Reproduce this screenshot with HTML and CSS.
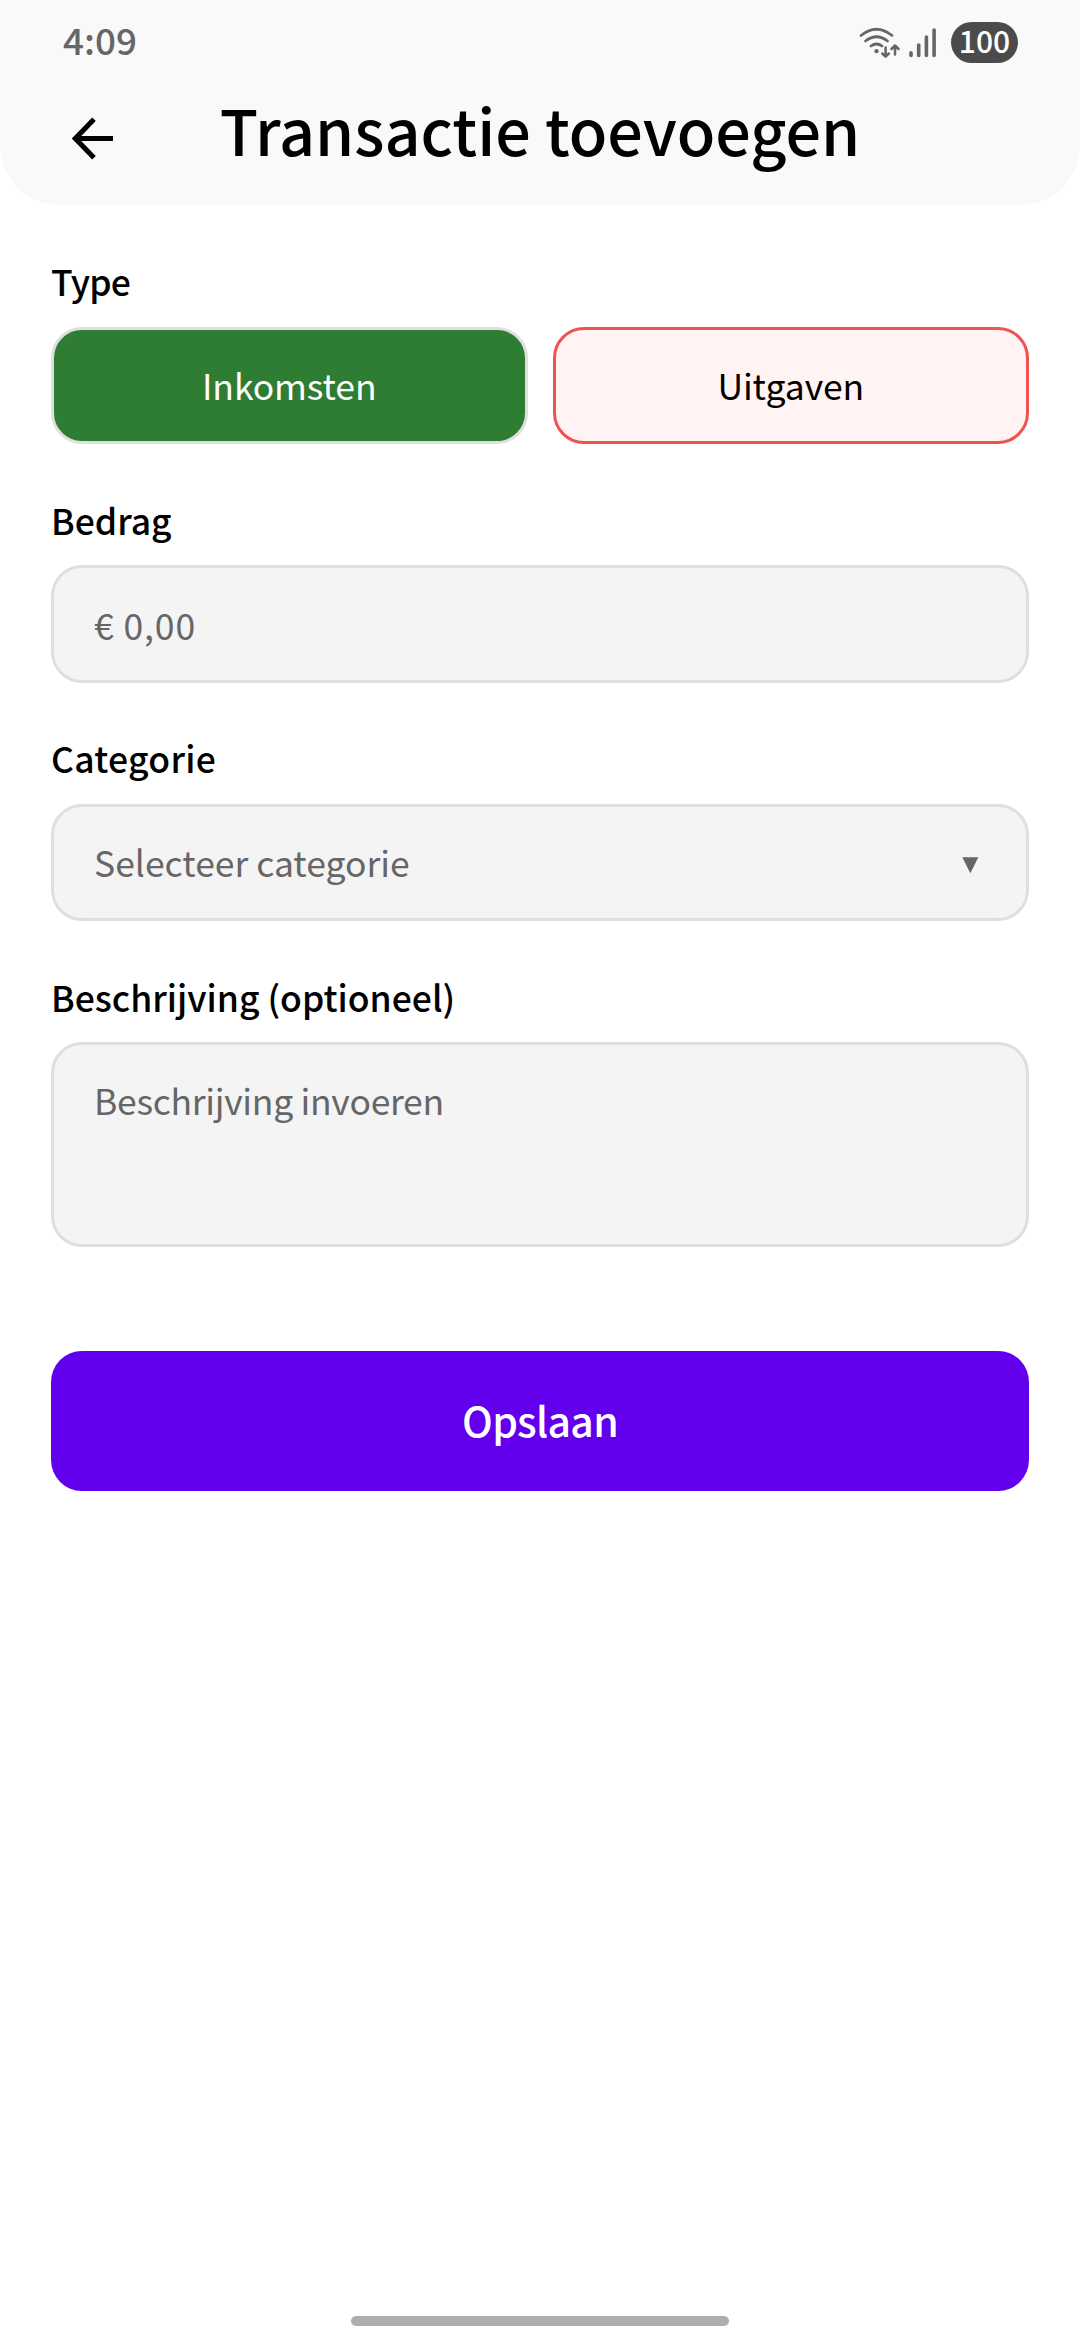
FILE: index.html
```html
<!DOCTYPE html>
<html lang="nl">
<head>
<meta charset="utf-8">
<title>Transactie toevoegen</title>
<link rel="stylesheet" href="styles.css">
</head>
<body>
<header class="header">
  <div class="status">
    <span class="time">4:09</span>
    <div class="status-icons">
      <svg class="wifi" width="42" height="34" viewBox="0 0 42 34" fill="none" stroke="#666" stroke-width="2.7" stroke-linecap="round" stroke-linejoin="round">
        <path d="M2 9.500Q17.500-3 33 9.500M6.500 15Q17.500 6.500 28.500 15M12 20Q17.500 16 23 20"/>
        <circle cx="17.500" cy="25.200" r="2.100" fill="#666" stroke="none"/>
        <path d="M26.600 21.500V30M23.300 27.500L26.600 30.700L29.900 27.500M36 28.500V20M32.500 23L36 19.500L39.500 23" stroke-width="2.500"/>
      </svg>
      <svg class="signal" width="28" height="34" viewBox="0 0 28 34" fill="none" stroke="#666" stroke-width="3.600" stroke-linecap="round">
        <path d="M2 26.700V29.500M9.700 19V29.500M17.400 11V29.500M25.100 4V29.500"/>
      </svg>
      <span class="battery">100</span>
    </div>
  </div>
  <div class="titlebar">
    <svg class="back" width="43" height="43" viewBox="0 0 43 43" fill="none" stroke="#000" stroke-width="5">
      <path d="M41 21.500H4.500M22 2.300L3.300 21.500L22 40.700"/>
    </svg>
    <h1 class="title">Transactie toevoegen</h1>
  </div>
</header>
<main class="form">
  <section class="field">
    <div class="label label-type">Type</div>
    <div class="toggle">
      <div class="option income">Inkomsten</div>
      <div class="option expense">Uitgaven</div>
    </div>
  </section>
  <section class="field">
    <div class="label label-low">Bedrag</div>
    <div class="input amount">€ 0,00</div>
  </section>
  <section class="field">
    <div class="label label-category">Categorie</div>
    <div class="input select">
      <span>Selecteer categorie</span>
      <svg class="caret" width="17" height="17" viewBox="0 0 17 17"><path d="M0.300 0.300H16.300L8.300 16.300Z" fill="#666"/></svg>
    </div>
  </section>
  <section class="field">
    <div class="label label-low">Beschrijving (optioneel)</div>
    <div class="input description">Beschrijving invoeren</div>
  </section>
  <div class="save">Opslaan</div>
</main>
<footer class="nav"><div class="handle"></div></footer>
</body>
</html>
```

FILE: styles.css
```css
* { box-sizing: border-box; }

body {
  margin: 0;
  width: 1080px;
  height: 2340px;
  display: flex;
  flex-direction: column;
  overflow: hidden;
  background: #fff;
  color: #000;
  font-family: "Noto Sans CJK SC", "Noto Sans", sans-serif;
  font-size: 35.5px;
}

.header {
  height: 205px;
  background: #f9f9f9;
  border-radius: 0 0 60px 60px;
}

.status {
  height: 84px;
  padding: 0 62px 0 63px;
  display: flex;
  justify-content: space-between;
}

.time {
  font-size: 36.8px;
  font-weight: 500;
  line-height: 78px;
  color: #666;
}

.status-icons {
  display: flex;
  align-items: center;
  height: 85px;
}

.signal { margin-left: 8px; }

.battery {
  width: 67px;
  height: 41px;
  margin-left: 14px;
  border-radius: 21px;
  background: #4b4b4b;
  color: #fff;
  font-size: 30px;
  font-weight: 500;
  line-height: 37px;
  text-align: center;
}

.titlebar {
  display: grid;
  grid-template-columns: 72px 1fr 72px;
  align-items: start;
}

.back {
  justify-self: end;
  margin-top: 33px;
  margin-right: -43px;
}

.title {
  margin: 0;
  font-size: 62.8px;
  font-weight: 500;
  line-height: 89px;
  text-align: center;
  white-space: nowrap;
}

.form {
  flex: 1;
  padding: 50px 51px 0;
  display: flex;
  flex-direction: column;
  gap: 49px;
}

.field {
  display: flex;
  flex-direction: column;
  gap: 20px;
}

.label {
  height: 52px;
  font-weight: 500;
  line-height: 52px;
}

.label-low { line-height: 54px; }
.label-type { letter-spacing: -0.8px; }
.label-category { letter-spacing: 0.3px; }

.toggle {
  display: grid;
  grid-template-columns: 1fr 1fr;
  gap: 25px;
}

.option {
  height: 117px;
  border: 3px solid #dfdfdf;
  border-radius: 31px;
  padding-bottom: 2px;
  display: flex;
  align-items: center;
  justify-content: center;
  letter-spacing: -0.1px;
}

.income {
  background: #2e7d32;
  color: #fff;
}

.expense {
  background: #fff3f3;
  border-color: #ef5350;
}

.input {
  height: 117px;
  padding: 0 40px;
  border: 3px solid #dfdfdf;
  border-radius: 31px;
  background: #f4f4f4;
  color: #666;
  display: flex;
  align-items: center;
}

.amount {
  height: 118px;
  letter-spacing: 0.9px;
}

.select {
  justify-content: space-between;
  padding-right: 47px;
  padding-bottom: 2px;
}

.caret { margin-top: 7px; }

.description {
  height: 205px;
  align-items: flex-start;
  padding-top: 29px;
  line-height: 51px;
  letter-spacing: -0.3px;
}

.save {
  height: 140px;
  margin-top: 55px;
  padding-bottom: 3px;
  border-radius: 31px;
  background: #6200ee;
  color: #fff;
  font-size: 40.9px;
  font-weight: 500;
  letter-spacing: -0.7px;
  display: flex;
  align-items: center;
  justify-content: center;
}

.nav {
  height: 24px;
  display: flex;
  justify-content: center;
}

.handle {
  width: 378px;
  height: 10px;
  border-radius: 5px;
  background: #aeaeae;
}
```
